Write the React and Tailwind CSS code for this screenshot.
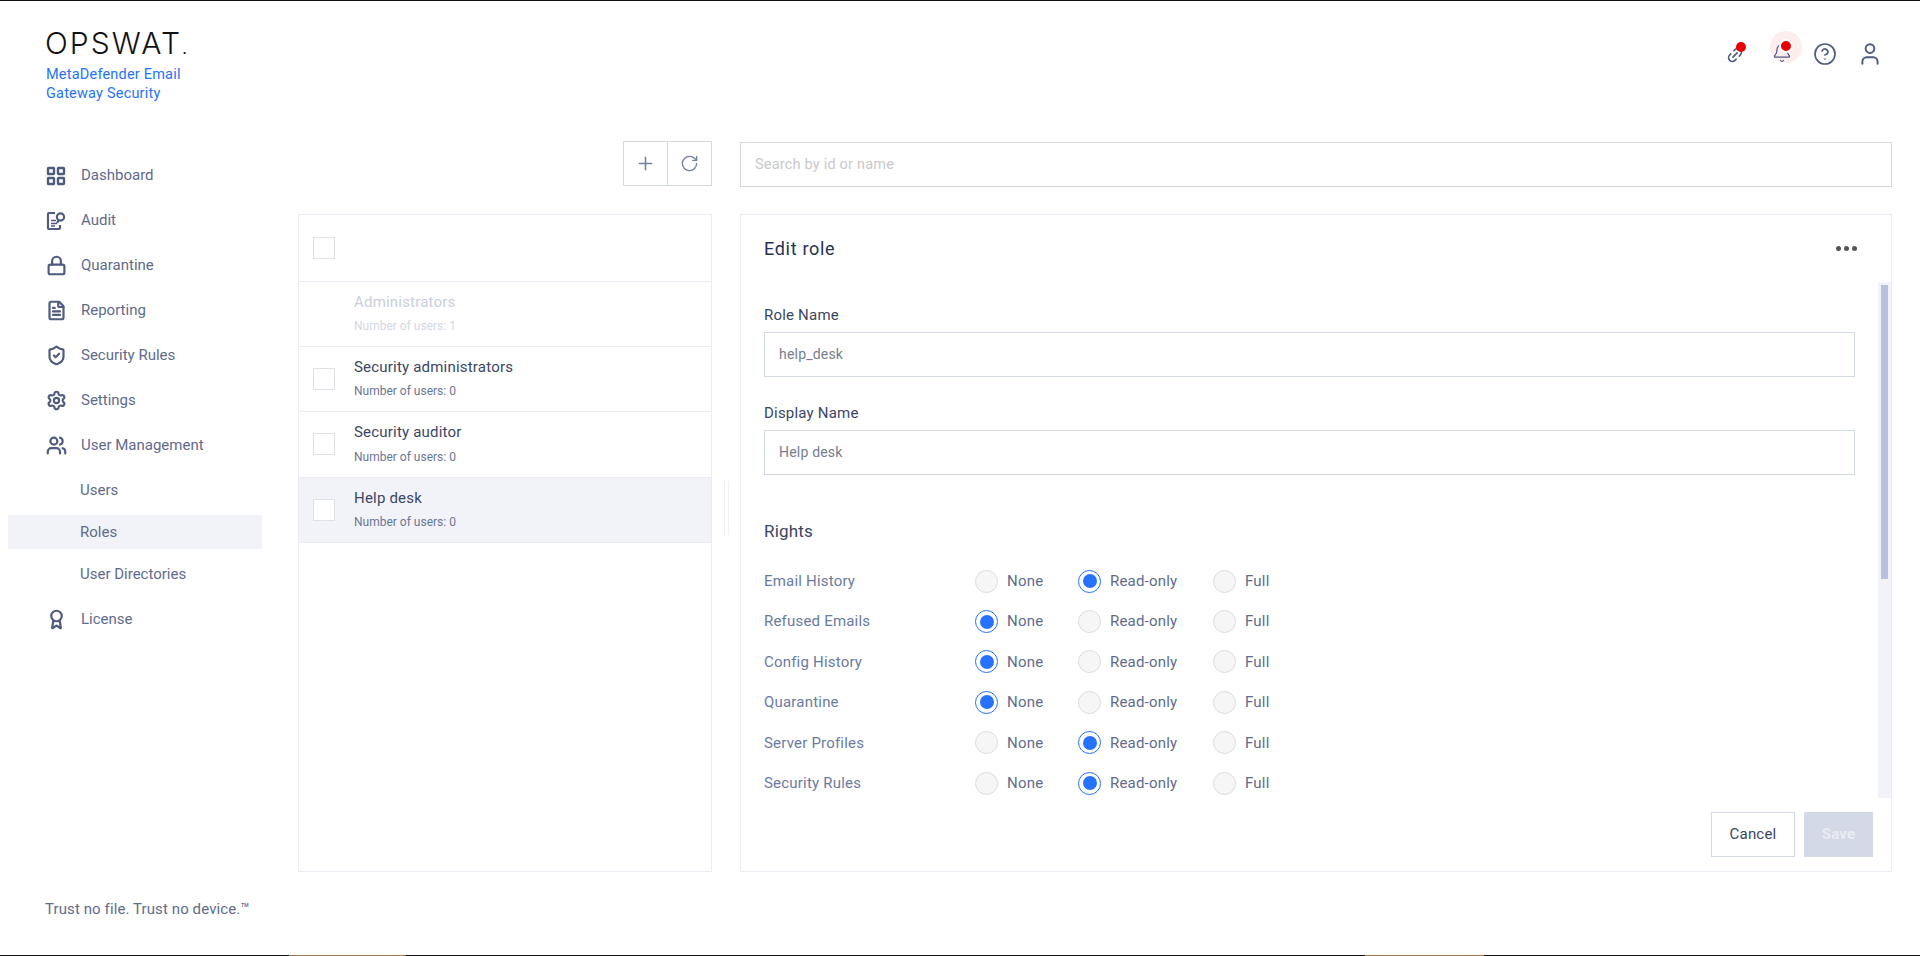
import React from "react";
import { Bell, CircleHelp, FileText, Link2, Lock, Plus, RotateCw, Settings, ShieldCheck, User, Users, Award } from "lucide-react";

function DashboardIcon() {
  return (
    <svg width="20" height="20" viewBox="0 0 20 20" fill="none" stroke="currentColor" strokeWidth="2.4">
      <rect x="2" y="2" width="6" height="6" rx="0.5" />
      <rect x="12" y="2" width="6" height="6" rx="0.5" />
      <rect x="2" y="12" width="6" height="6" rx="0.5" />
      <rect x="12" y="12" width="6" height="6" rx="0.5" />
    </svg>
  );
}

function AuditIcon() {
  return (
    <svg width="20" height="20" viewBox="0 0 20 20" fill="none" stroke="currentColor" strokeWidth="2.2">
      <path d="M9 2H3a1 1 0 0 0-1 1v14a1 1 0 0 0 1 1h10a1 1 0 0 0 1-1v-3" />
      <path d="M5 9.5h5M5 12.5h6M5 15h4" strokeWidth="1.6" />
      <circle cx="14.5" cy="6" r="3.6" />
      <path d="M12.5 9.5 11 12" />
    </svg>
  );
}

const nav = [
  { label: "Dashboard", icon: <DashboardIcon /> },
  { label: "Audit", icon: <AuditIcon /> },
  { label: "Quarantine", icon: <Lock size={21} strokeWidth={2.5} /> },
  { label: "Reporting", icon: <FileText size={21} strokeWidth={2.5} /> },
  { label: "Security Rules", icon: <ShieldCheck size={21} strokeWidth={2.5} /> },
  { label: "Settings", icon: <Settings size={21} strokeWidth={2.4} /> },
  { label: "User Management", icon: <Users size={21} strokeWidth={2.5} /> },
];

const roles = [
  { name: "Security administrators", users: 0 },
  { name: "Security auditor", users: 0 },
  { name: "Help desk", users: 0, active: true },
];

const rights = [
  { name: "Email History", value: 1 },
  { name: "Refused Emails", value: 0 },
  { name: "Config History", value: 0 },
  { name: "Quarantine", value: 0 },
  { name: "Server Profiles", value: 1 },
  { name: "Security Rules", value: 1 },
];

function Radio({ checked, label, className }) {
  return (
    <div className={`flex items-center gap-[9px] ${className}`}>
      {checked ? (
        <span className="flex h-[23px] w-[23px] items-center justify-center rounded-full border-[1.5px] border-[#2672fb] bg-white">
          <span className="h-[14px] w-[14px] rounded-full bg-[#2672fb]" />
        </span>
      ) : (
        <span className="h-[23px] w-[23px] rounded-full border border-[#dcdcdc] bg-[#f6f6f6]" />
      )}
      <span className="text-[15px] text-[#5f6b8c]">{label}</span>
    </div>
  );
}

export default function App() {
  return (
    <div className="flex h-screen w-full flex-col overflow-hidden bg-white font-['Roboto',sans-serif] tracking-[0.2px]">
      <div className="h-[1px] shrink-0 bg-[#111]" />

      <div className="flex min-h-0 flex-1">
        {/* sidebar */}
        <aside className="flex w-[298px] shrink-0 flex-col">
          <div className="pl-[45px] pt-[26px]">
            <div className="font-['Inter',sans-serif] text-[30px] font-light leading-[33px] tracking-[2.1px] text-[#111]">
              OPSWAT<span className="text-[16px] font-normal tracking-normal">.</span>
            </div>
            <div className="pl-[1px] text-[14.5px] leading-[19px] text-[#2672fb]">
              MetaDefender Email
              <br />
              Gateway Security
            </div>
          </div>

          <nav className="mt-[50px] flex flex-col pr-[36px] text-[15px] tracking-normal text-[#5f6b8c]">
            {nav.map((item) => (
              <div key={item.label} className="flex h-[45px] items-center gap-[15px] pl-[46px]">
                <span className="w-[20px] text-[#4f5b7f]">{item.icon}</span>
                {item.label}
              </div>
            ))}
            <div className="mt-[5px] flex h-[34px] items-center pl-[80px]">Users</div>
            <div className="ml-[8px] mt-[8px] flex h-[34px] items-center bg-[#f2f3f8] pl-[72px]">Roles</div>
            <div className="mt-[8px] flex h-[34px] items-center pl-[80px]">User Directories</div>
            <div className="mt-[6px] flex h-[45px] items-center gap-[15px] pl-[46px]">
              <span className="w-[20px] text-[#4f5b7f]">
                <Award size={21} strokeWidth={2.5} />
              </span>
              License
            </div>
          </nav>

          <div className="mt-auto pb-[35px] pl-[45px] text-[15px] tracking-[0.1px] text-[#5f6b8c]">Trust no file. Trust no device.™</div>
        </aside>

        {/* main */}
        <main className="flex min-w-0 flex-1 flex-col pr-[28px]">
          <header className="flex h-[140px] shrink-0 items-start justify-end pr-[9px] text-[#4f5b7f]">
            <div className="relative mt-[45px]">
              <Link2 size={18} strokeWidth={2.2} className="-rotate-45" />
              <span className="absolute -right-[2px] -top-[4px] h-[10px] w-[10px] rounded-full bg-[#e60000]" />
            </div>
            <div className="relative ml-[26px] mt-[30px] flex h-[32px] w-[32px] items-end rounded-full bg-[#fdeeee] pl-[2px]">
              <Bell size={20} strokeWidth={1.5} />
              <span className="absolute left-[9px] top-[8px] h-[14px] w-[14px] rounded-full border-2 border-white bg-[#e60000]" />
            </div>
            <CircleHelp size={24} strokeWidth={1.7} className="ml-[11px] mt-[41px]" />
            <User size={26} strokeWidth={1.8} className="ml-[20px] mt-[40px]" />
          </header>

          <div className="flex shrink-0 gap-[28px]">
            <div className="flex w-[414px] justify-end">
              <div className="flex h-[45px] border border-[#d3d9e6] text-[#75809e]">
                <div className="flex w-[44px] items-center justify-center border-r border-[#d3d9e6]">
                  <Plus size={21} strokeWidth={1.8} />
                </div>
                <div className="flex w-[43px] items-center justify-center">
                  <RotateCw size={19} strokeWidth={1.7} />
                </div>
              </div>
            </div>
            <div className="mt-[1px] flex h-[45px] flex-1 items-center border border-[#d3d9e6] pl-[14px] text-[14.5px] text-[#c9c9c9]">
              Search by id or name
            </div>
          </div>

          <div className="mt-[27px] flex h-[658px] shrink-0 gap-[28px]">
            {/* roles list */}
            <section className="relative w-[414px] border border-[#e9ecf3]">
              <div className="flex h-[67px] items-center border-b border-[#e9ecf3] pl-[14px]">
                <span className="h-[22px] w-[22px] border border-[#dfe1e6]" />
              </div>
              <div className="flex h-[65px] flex-col justify-center border-b border-[#e9ecf3] pb-[2px] pl-[55px]">
                <div className="text-[15px] font-[450] text-[#c9cede]">Administrators</div>
                <div className="mt-[4px] text-[12px] tracking-normal text-[#d3d7e2]">Number of users: 1</div>
              </div>
              {roles.map((role) => (
                <div
                  key={role.name}
                  className={`flex h-[65.33px] items-center border-b border-[#e9ecf3] pl-[14px] ${role.active ? "bg-[#f2f3f8]" : ""}`}
                >
                  <span className="h-[22px] w-[22px] border border-[#dfe1e6] bg-white" />
                  <div className="pb-[2px] pl-[19px]">
                    <div className="text-[15px] font-[450] text-[#3a4664]">{role.name}</div>
                    <div className="mt-[4px] text-[12px] tracking-normal text-[#6a7595]">Number of users: {role.users}</div>
                  </div>
                </div>
              ))}
              <div className="absolute -right-[18px] top-[266px] h-[54px] w-[5px] border-x border-[#f1f1f3]" />
            </section>

            {/* edit panel */}
            <section className="relative flex min-w-0 flex-1 flex-col border border-[#e9ecf3]">
              <div className="flex h-[67px] shrink-0 items-center justify-between pb-[1px] pl-[23px] pr-[34px]">
                <h2 className="text-[18px] font-normal tracking-[0.7px] text-[#243356]">Edit role</h2>
                <div className="flex gap-[3px]">
                  <span className="h-[5px] w-[5px] rounded-full bg-[#555]" />
                  <span className="h-[5px] w-[5px] rounded-full bg-[#555]" />
                  <span className="h-[5px] w-[5px] rounded-full bg-[#555]" />
                </div>
              </div>

              <div className="min-h-0 flex-1 overflow-hidden pl-[23px] pr-[36px]">
                <label className="block pt-[23px] text-[15px] font-[450] leading-[20px] text-[#3a4664]">Role Name</label>
                <div className="mt-[7px] flex h-[45px] items-center border border-[#d3d9e6] pl-[14px] text-[14px] text-[#767d8f]">
                  help_desk
                </div>
                <label className="block pt-[26px] text-[15px] font-[450] leading-[20px] text-[#3a4664]">Display Name</label>
                <div className="mt-[7px] flex h-[45px] items-center border border-[#d3d9e6] pl-[14px] text-[14px] text-[#767d8f]">
                  Help desk
                </div>
                <h3 className="pt-[46px] text-[17px] font-[450] leading-[20px] text-[#3a4664]">Rights</h3>
                <div className="mt-[20px] flex flex-col">
                  {rights.map((right) => (
                    <div key={right.name} className="flex h-[40.4px] items-center">
                      <div className="w-[211px] text-[15px] font-[450] text-[#6b7a9f]">{right.name}</div>
                      <Radio checked={right.value === 0} label="None" className="w-[103px]" />
                      <Radio checked={right.value === 1} label="Read-only" className="w-[135px]" />
                      <Radio checked={right.value === 2} label="Full" className="w-[80px]" />
                    </div>
                  ))}
                </div>
              </div>

              <div className="flex h-[73px] shrink-0 justify-end gap-[9px] pr-[18px] pt-[14px]">
                <button className="h-[45px] w-[84px] border border-[#d3d9e6] text-[15px] font-[450] text-[#3a4664]">Cancel</button>
                <button className="h-[45px] w-[69px] bg-[#d3d9e6] text-[15px] font-bold text-[#e9ecf3]">Save</button>
              </div>

              <div className="absolute right-0 top-[67px] h-[516px] w-[13px] bg-[#f2f3f8] px-[3px] py-[3px]">
                <div className="h-[294px] w-[7px] bg-[#b5c1dd]" />
              </div>
            </section>
          </div>
        </main>
      </div>

      <div className="flex h-[1px] shrink-0 bg-[#111]">
        <div className="w-[289px] shrink-0" />
        <div className="w-[117px] shrink-0 bg-[#a8743f]" />
        <div className="w-[959px] shrink-0" />
        <div className="w-[119px] shrink-0 bg-[#a8743f]" />
      </div>
    </div>
  );
}
